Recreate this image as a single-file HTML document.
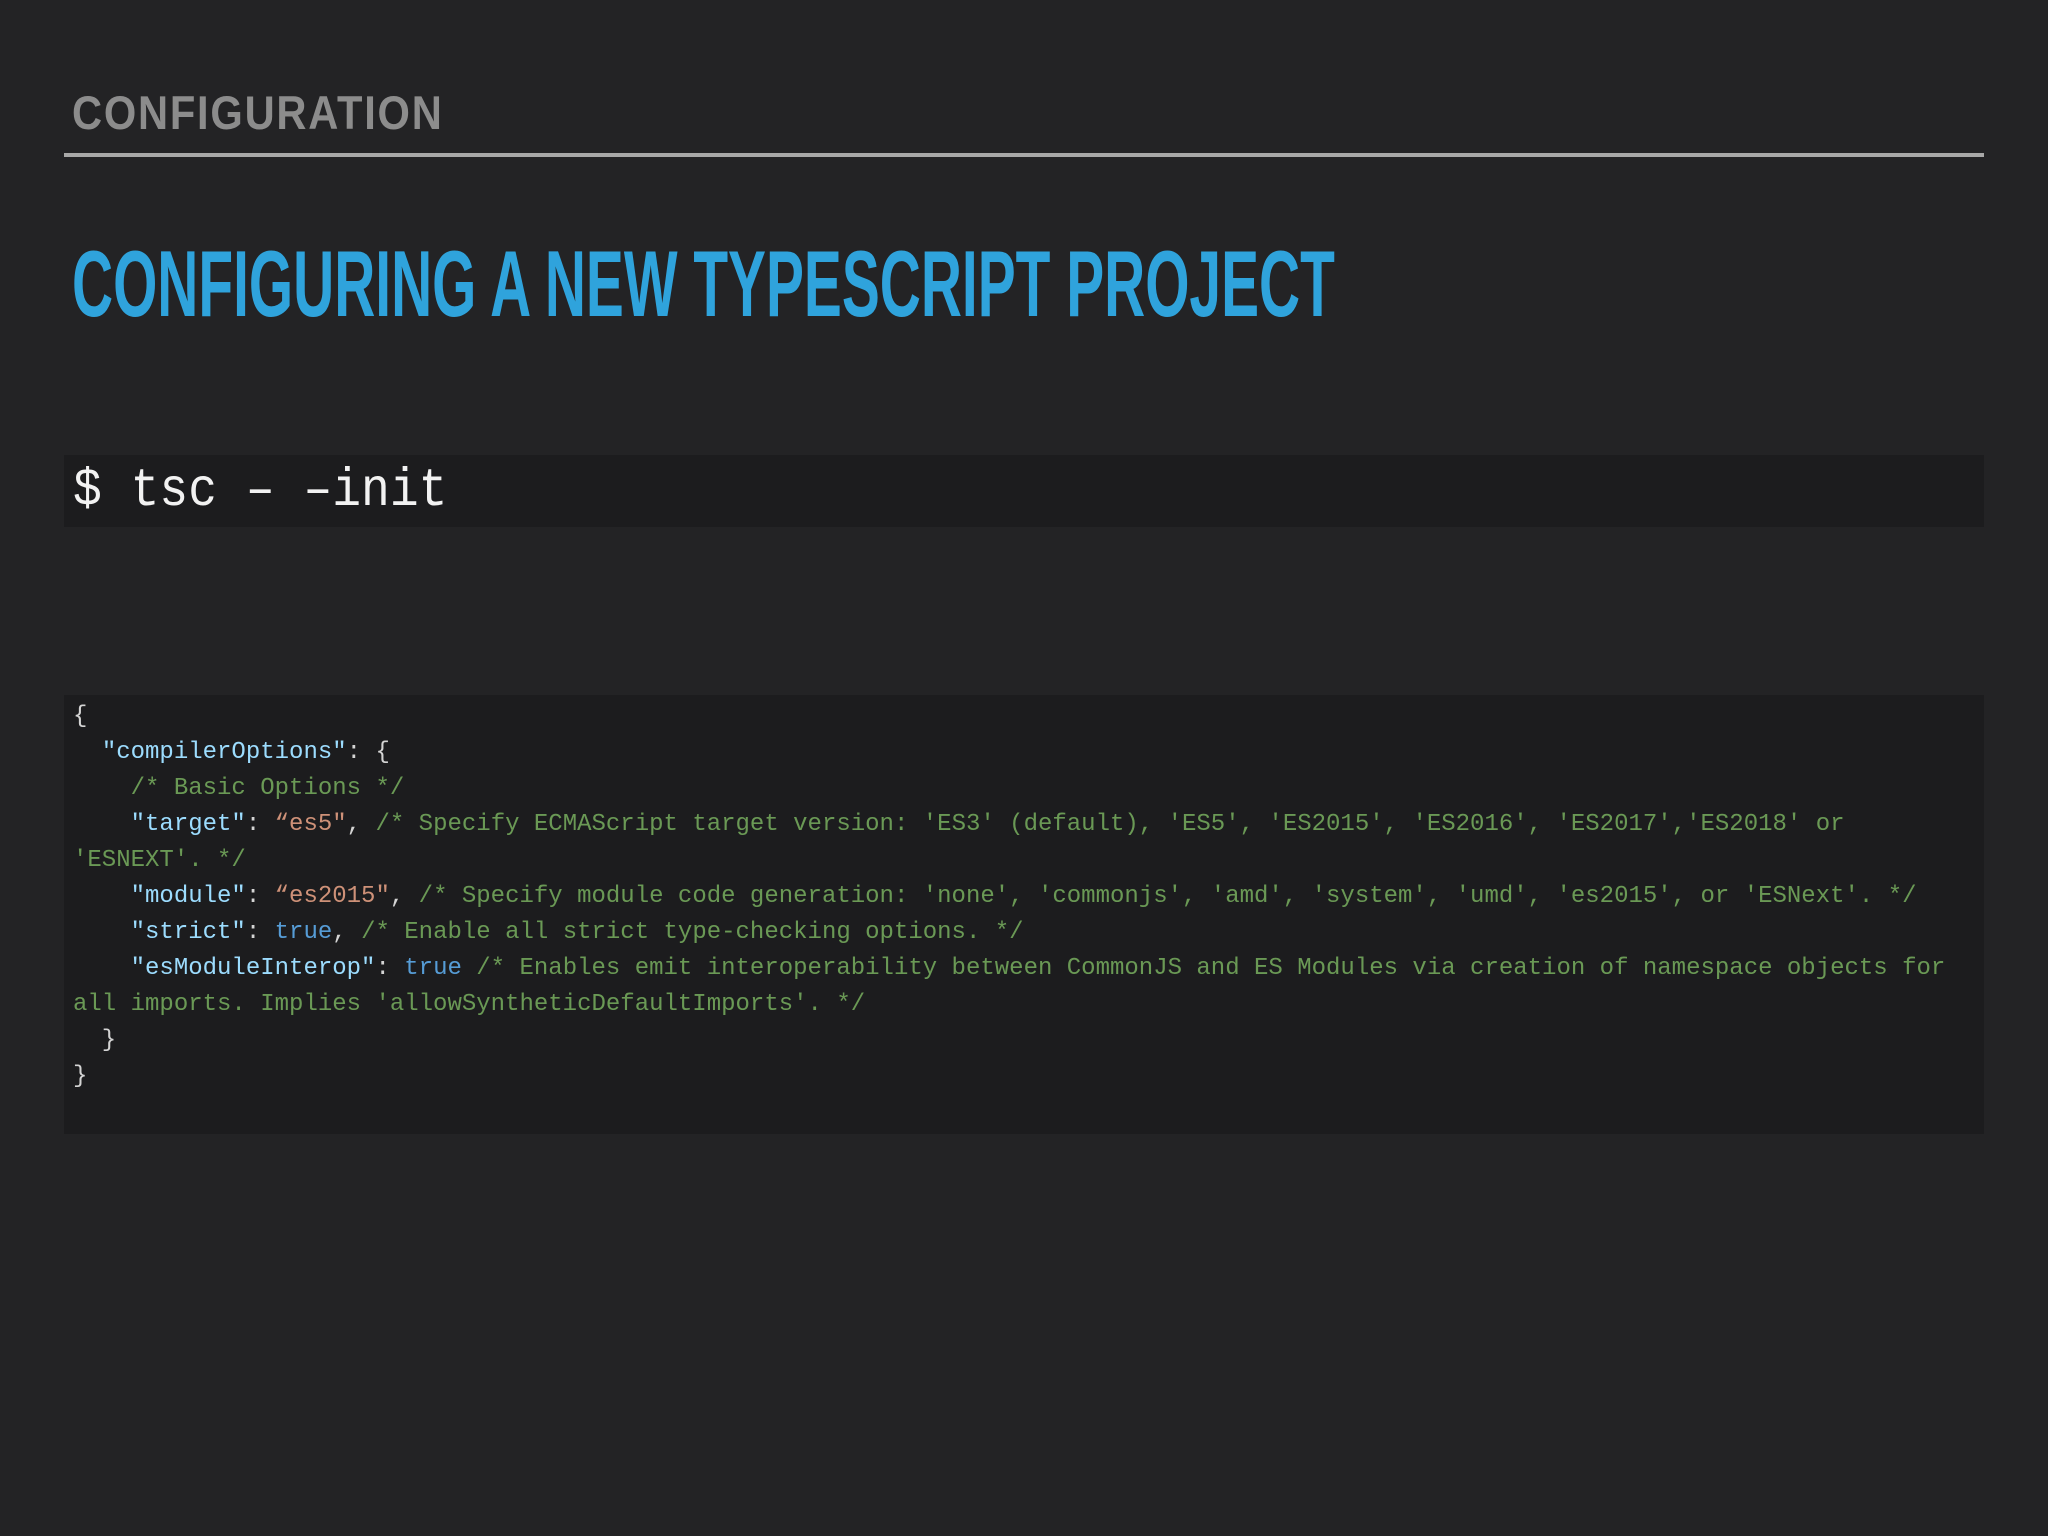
<!DOCTYPE html>
<html><head><meta charset="utf-8"><style>
html,body{margin:0;padding:0}
body{width:2048px;height:1536px;background:#232325;position:relative;overflow:hidden;font-family:"Liberation Sans",sans-serif}
.sec{position:absolute;left:72px;top:83px;font-size:47px;color:#8c8c8c;letter-spacing:2px;line-height:60px;font-weight:bold;transform-origin:0 0;transform:scaleX(0.886)}
.rule{position:absolute;left:64px;top:153px;width:1920px;height:4px;background:#a8a8a8}
.h1{position:absolute;left:72px;top:229px;font-family:"Liberation Sans",sans-serif;font-weight:bold;font-size:94px;line-height:110px;color:#2fa3dc;white-space:nowrap;transform-origin:0 0;transform:scaleX(0.605)}
.cmd{position:absolute;left:64px;top:455px;width:1920px;height:72px;background:#1c1c1e}
.cmd span{position:absolute;left:9px;top:3px;font-family:"Liberation Mono",monospace;font-size:48px;line-height:60px;color:#f2f2f2;white-space:pre;transform-origin:0 0;transform:scaleY(1.12)}
.code{position:absolute;left:64px;top:695px;width:1920px;height:439px;background:#1c1c1e}
pre{margin:0;position:absolute;left:9px;top:4px;font-family:"Liberation Mono",monospace;font-size:24px;line-height:36px;color:#d4d4d4}
.k{color:#9cdcfe}.c{color:#6a9955}.s{color:#ce9178}.b{color:#569cd6}
</style></head><body>
<div class="sec">CONFIGURATION</div>
<div class="rule"></div>
<div class="h1">CONFIGURING A NEW TYPESCRIPT PROJECT</div>
<div class="cmd"><span>$ tsc – –init</span></div>
<div class="code"><pre>{
  <span class="k">"compilerOptions"</span>: {
    <span class="c">/* Basic Options */</span>
    <span class="k">"target"</span>: <span class="s">“es5"</span>, <span class="c">/* Specify ECMAScript target version: 'ES3' (default), 'ES5', 'ES2015', 'ES2016', 'ES2017','ES2018' or</span>
<span class="c">'ESNEXT'. */</span>
    <span class="k">"module"</span>: <span class="s">“es2015"</span>, <span class="c">/* Specify module code generation: 'none', 'commonjs', 'amd', 'system', 'umd', 'es2015', or 'ESNext'. */</span>
    <span class="k">"strict"</span>: <span class="b">true</span>, <span class="c">/* Enable all strict type-checking options. */</span>
    <span class="k">"esModuleInterop"</span>: <span class="b">true</span> <span class="c">/* Enables emit interoperability between CommonJS and ES Modules via creation of namespace objects for</span>
<span class="c">all imports. Implies 'allowSyntheticDefaultImports'. */</span>
  }
}</pre></div>
</body></html>
